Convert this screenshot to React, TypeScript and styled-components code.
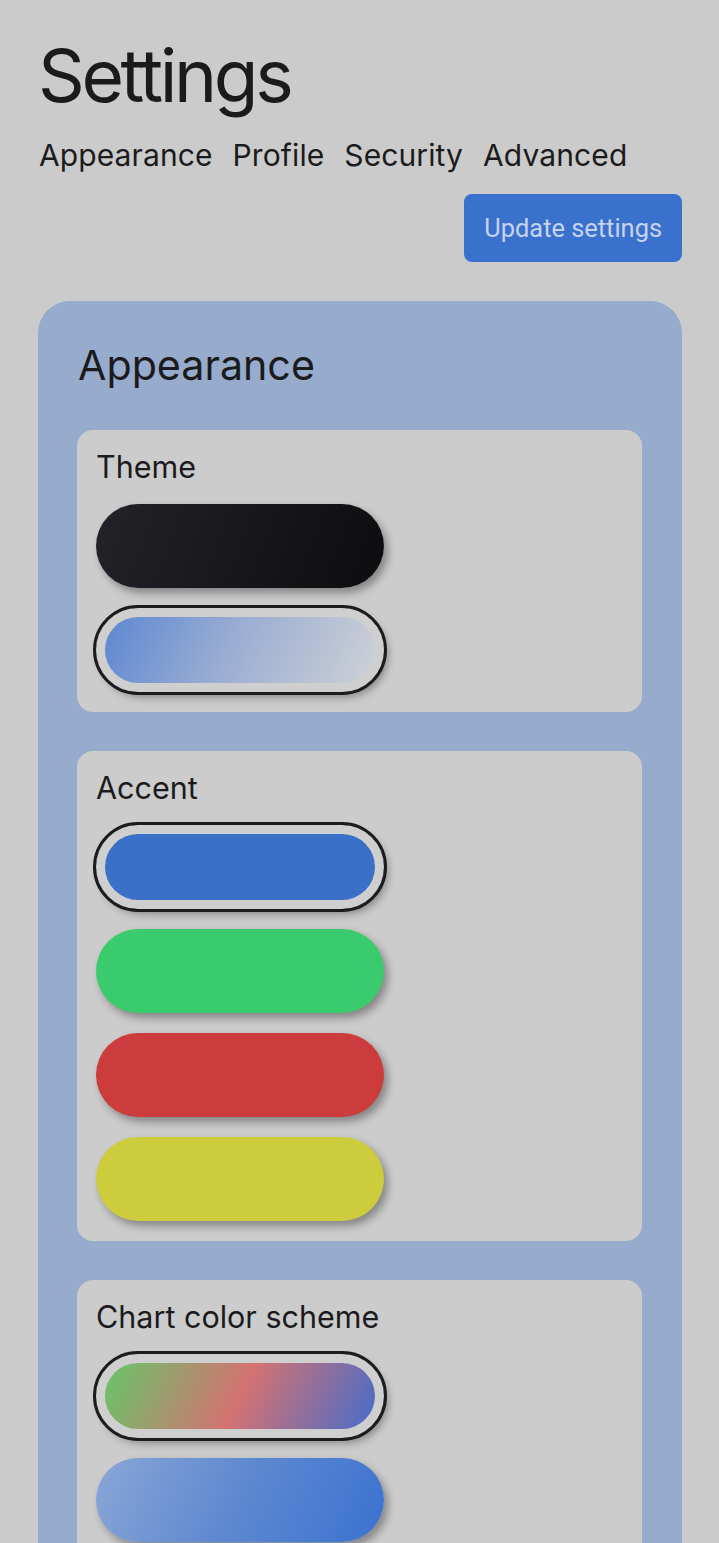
import styled, { createGlobalStyle } from "styled-components";

const GlobalStyle = createGlobalStyle`
  html, body {
    margin: 0;
    padding: 0;
    background: #cbcbcb;
  }
  body {
    font-family: Inter, "Noto Sans", sans-serif;
    color: #1b1b1d;
  }
`;

const Page = styled.div`
  padding: 32px 37px 40px 38px;
  display: flex;
  flex-direction: column;
`;

const Title = styled.h1`
  margin: 0;
  font-size: 73px;
  font-weight: 400;
  line-height: 87px;
  letter-spacing: -3.4px;
`;

const Tabs = styled.nav`
  display: flex;
  gap: 20px;
  margin-top: 18px;
  padding-left: 1px;
`;

const Tab = styled.span`
  font-size: 30px;
  line-height: 36px;
  letter-spacing: 0.1px;
`;

const Toolbar = styled.div`
  display: flex;
  justify-content: flex-end;
  margin-top: 21px;
`;

const UpdateButton = styled.button`
  height: 68px;
  padding: 0 20px;
  border: none;
  border-radius: 8px;
  background: #3a71cc;
  color: #c6d3ee;
  font-family: Roboto, "Liberation Sans", sans-serif;
  font-size: 25.4px;
`;

const Card = styled.section`
  margin-top: 39px;
  background: #97abcc;
  border-radius: 32px;
  padding: 40px 40px 40px 39px;
  display: flex;
  flex-direction: column;
  gap: 39px;
`;

const CardTitle = styled.h2`
  margin: 0 0 0 1px;
  font-size: 41.2px;
  font-weight: 400;
  line-height: 48px;
  padding-bottom: 2px;
`;

const Panel = styled.div`
  background: #cccccc;
  border-radius: 16px;
  padding: 20px 19px 20px 19px;
  display: flex;
  flex-direction: column;
  align-items: flex-start;
  gap: 20px;
`;

const PanelLabel = styled.div`
  font-size: 30.5px;
  line-height: 34px;
`;

const Swatch = styled.button<{ $fill: string; $selected?: boolean }>`
  width: 288px;
  height: 84px;
  border: none;
  padding: 0;
  border-radius: 999px;
  background: ${(p) => p.$fill};
  box-shadow: ${(p) =>
    p.$selected
      ? "inset 0 0 0 9px #cfcfcf, 4px 5px 8px rgba(0, 0, 0, 0.35)"
      : "4px 5px 8px rgba(0, 0, 0, 0.35)"};
  outline: ${(p) => (p.$selected ? "3px solid #1c1c1c" : "none")};
  outline-offset: 0;
`;

const themes = [
  { fill: "linear-gradient(110deg, #222228, #0d0d10)" },
  {
    fill: "linear-gradient(115deg, #5f88d2 5%, #98acd2 45%, #cdd0d6 95%)",
    selected: true,
  },
];

const accents = [
  { fill: "#3a70c8", selected: true },
  { fill: "#3acb6f" },
  { fill: "#cc3c3c" },
  { fill: "#cccc3c" },
];

const charts = [
  {
    fill: "linear-gradient(115deg, #68c468 5%, #d47272 50%, #4a6cc8 95%)",
    selected: true,
  },
  { fill: "linear-gradient(115deg, #8aa6d6 0%, #5d88d0 50%, #3a72d0 100%)" },
];

const App = () => {
  return (
    <>
      <GlobalStyle />
      <Page>
        <Title>Settings</Title>
        <Tabs>
          <Tab>Appearance</Tab>
          <Tab>Profile</Tab>
          <Tab>Security</Tab>
          <Tab>Advanced</Tab>
        </Tabs>
        <Toolbar>
          <UpdateButton>Update settings</UpdateButton>
        </Toolbar>
        <Card>
          <CardTitle>Appearance</CardTitle>
          <Panel>
            <PanelLabel>Theme</PanelLabel>
            {themes.map((t, i) => (
              <Swatch key={i} $fill={t.fill} $selected={t.selected} />
            ))}
          </Panel>
          <Panel>
            <PanelLabel>Accent</PanelLabel>
            {accents.map((a, i) => (
              <Swatch key={i} $fill={a.fill} $selected={a.selected} />
            ))}
          </Panel>
          <Panel>
            <PanelLabel>Chart color scheme</PanelLabel>
            {charts.map((c, i) => (
              <Swatch key={i} $fill={c.fill} $selected={c.selected} />
            ))}
          </Panel>
        </Card>
      </Page>
    </>
  );
};

export default App;
